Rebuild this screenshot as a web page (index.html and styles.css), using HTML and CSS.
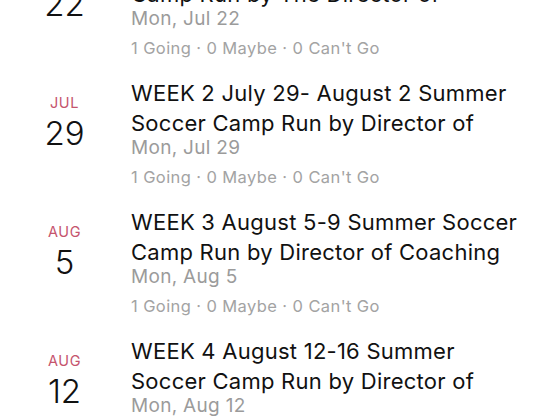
FILE: index.html
```html
<!DOCTYPE html>
<html lang="en">

<head>
    <meta charset="UTF-8">
    <meta name="viewport" content="width=device-width, initial-scale=1.0">
    <title>Events</title>
    <link rel="stylesheet" href="styles.css">
</head>

<body>
    <!-- Список событий -->
    <div class="event-list">
        <div class="event">
            <div class="event-date">
                <div class="month">JUL</div>
                <div class="day">22</div>
            </div>
            <div class="event-info">
                <div class="title">WEEK 1 July 22-26 Summer Soccer Camp Run by The Director of</div>
                <div class="when">Mon, Jul 22</div>
                <div class="stats">1 Going · 0 Maybe · 0 Can't Go</div>
            </div>
        </div>

        <div class="event">
            <div class="event-date">
                <div class="month">JUL</div>
                <div class="day">29</div>
            </div>
            <div class="event-info">
                <div class="title">WEEK 2 July 29- August 2 Summer Soccer Camp Run by Director of</div>
                <div class="when">Mon, Jul 29</div>
                <div class="stats">1 Going · 0 Maybe · 0 Can't Go</div>
            </div>
        </div>

        <div class="event">
            <div class="event-date">
                <div class="month">AUG</div>
                <div class="day">5</div>
            </div>
            <div class="event-info">
                <div class="title">WEEK 3 August 5-9 Summer Soccer Camp Run by Director of Coaching</div>
                <div class="when">Mon, Aug 5</div>
                <div class="stats">1 Going · 0 Maybe · 0 Can't Go</div>
            </div>
        </div>

        <div class="event">
            <div class="event-date">
                <div class="month">AUG</div>
                <div class="day">12</div>
            </div>
            <div class="event-info">
                <div class="title">WEEK 4 August 12-16 Summer Soccer Camp Run by Director of</div>
                <div class="when">Mon, Aug 12</div>
                <div class="stats">1 Going · 0 Maybe · 0 Can't Go</div>
            </div>
        </div>
    </div>
</body>

</html>
```

FILE: styles.css
```css
/* Список событий */
body {
    margin: 0;
    background-color: #fff;
    font-family: Inter, "Noto Sans", sans-serif;
    overflow: hidden;
}

.event-list {
    margin-top: -63px;
}

.event {
    display: flex;
    height: 129px;
    box-sizing: border-box;
    padding-top: 12px;
}

.event-date {
    width: 131px;
    flex-shrink: 0;
    padding-top: 16px;
    padding-right: 2px;
    box-sizing: border-box;
    text-align: center;
}

.month {
    font-size: 14.5px;
    line-height: 18px;
    color: #c5546d;
    letter-spacing: 0.6px;
}

.day {
    font-size: 33px;
    font-weight: 300;
    line-height: 42px;
    color: #111;
}

.event-info {
    flex: 1;
    padding-right: 20px;
}

.title {
    font-size: 22px;
    line-height: 30px;
    letter-spacing: 0.25px;
    color: #111;
    max-height: 60px;
    overflow: hidden;
}

.when {
    font-size: 19px;
    line-height: 20px;
    letter-spacing: 0.3px;
    color: #9b9b9b;
}

.stats {
    margin-top: 9px;
    font-size: 16.5px;
    line-height: 20px;
    letter-spacing: 0.4px;
    color: #a3a3a3;
}
```
